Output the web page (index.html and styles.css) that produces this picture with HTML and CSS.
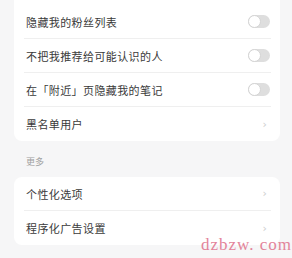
FILE: index.html
```html
<!DOCTYPE html>
<html lang="zh-CN">
<head>
    <meta charset="UTF-8">
    <meta name="viewport" content="width=device-width, initial-scale=1.0">
    <title>隐私设置</title>
    <link rel="stylesheet" href="styles.css">
</head>
<body>
    <section class="card first">
        <div class="row">
            <span class="label">隐藏我的粉丝列表</span>
            <span class="toggle"></span>
        </div>
        <div class="row">
            <span class="label">不把我推荐给可能认识的人</span>
            <span class="toggle"></span>
        </div>
        <div class="row">
            <span class="label">在「附近」页隐藏我的笔记</span>
            <span class="toggle"></span>
        </div>
        <div class="row last">
            <span class="label">黑名单用户</span>
            <span class="chevron">&#8250;</span>
        </div>
    </section>

    <h4 class="section-title">更多</h4>

    <section class="card">
        <div class="row">
            <span class="label">个性化选项</span>
            <span class="chevron">&#8250;</span>
        </div>
        <div class="row last">
            <span class="label">程序化广告设置</span>
            <span class="chevron">&#8250;</span>
        </div>
    </section>

    <div class="watermark">dzbzw. com</div>
</body>
</html>
```

FILE: styles.css
```css
body {
    margin: 0;
    padding: 0;
    background-color: #f6f6f7;
    font-family: "Noto Sans CJK SC", "Noto Sans", sans-serif;
    color: #333;
    position: relative;
    height: 258px;
    overflow: hidden;
}
.card {
    background: #fff;
    margin: 0 12px 0 14px;
    border-radius: 8px;
}
.card.first {
    padding-top: 5px;
    border-radius: 0 0 8px 8px;
}
.row {
    display: flex;
    align-items: center;
    justify-content: space-between;
    height: 33px;
    margin: 0 9px 0 10px;
    padding-left: 2px;
    border-bottom: 1px solid #efefef;
}
.row.last {
    border-bottom: none;
    height: 34px;
}
.label {
    font-size: 11px;
    letter-spacing: 0.4px;
    color: #3a3a3a;
}
.toggle {
    position: relative;
    width: 22px;
    height: 13px;
    border-radius: 7px;
    background: #dedede;
    margin-right: 1px;
}
.toggle::after {
    content: "";
    position: absolute;
    left: 0;
    top: 0;
    width: 11px;
    height: 11px;
    border-radius: 50%;
    background: #fff;
    border: 1px solid #d4d4d4;
}
.chevron {
    font-family: "DejaVu Sans", sans-serif;
    font-size: 11px;
    color: #cdcdcd;
    margin-right: 4px;
}
.section-title {
    margin: 0;
    padding: 14px 0 9px 26px;
    font-size: 9px;
    font-weight: normal;
    color: #a0a0a0;
    line-height: 13px;
}
.watermark {
    position: absolute;
    right: 0;
    bottom: 3px;
    font-family: "Liberation Serif", serif;
    font-size: 17px;
    letter-spacing: 1px;
    color: #e3849a;
}
```
